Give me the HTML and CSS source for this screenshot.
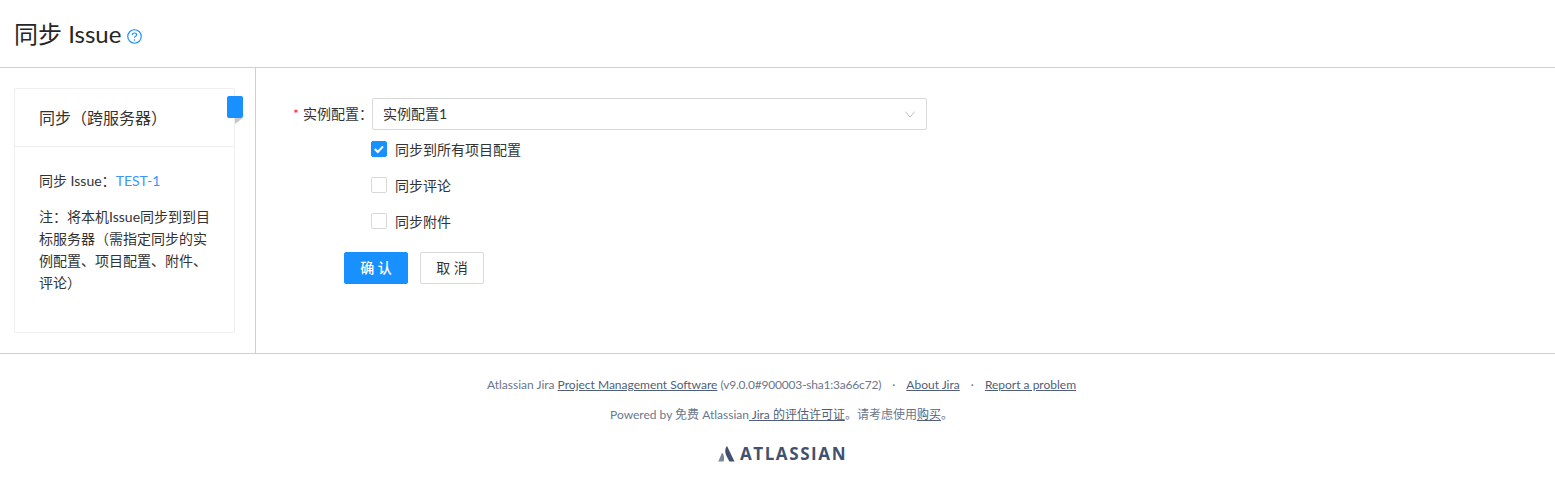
FILE: index.html
```html
<!DOCTYPE html>
<html lang="zh-CN">
<head>
<meta charset="utf-8">
<title>同步 Issue</title>
<link rel="stylesheet" href="styles.css">
</head>
<body>
<header class="page-header">
  <h1 class="page-title">同步 Issue</h1>
  <svg class="help" width="15" height="15" viewBox="0 0 14 14" fill="none">
    <circle cx="7" cy="7" r="6.3" stroke="#1890ff" stroke-width="1.1"/>
    <path d="M5 5.5C5 4.4 5.9 3.7 7 3.7s2 .7 2 1.7c0 1.4-2 1.4-2 2.8" stroke="#1890ff" stroke-width="1"/>
    <circle cx="7" cy="10.2" r=".7" fill="#1890ff"/>
  </svg>
</header>
<div class="content">
  <aside class="side">
    <div class="card">
      <div class="ribbon"></div>
      <div class="card-head">同步（跨服务器）</div>
      <div class="card-body">
        <p class="line">同步 Issue：<a class="issue-link">TEST-1</a></p>
        <p class="note">注：将本机Issue同步到到目标服务器（需指定同步的实例配置、项目配置、附件、评论）</p>
      </div>
    </div>
  </aside>
  <main class="main">
    <div class="form-row">
      <label class="form-label"><span class="req">*</span>实例配置：</label>
      <div class="select">
        <span>实例配置1</span>
        <svg class="chev" width="10" height="7" viewBox="0 0 10 7" fill="none"><path d="M.4 .6L5 6.2 9.6 .6" stroke="#bfbfbf" stroke-width="1"/></svg>
      </div>
    </div>
    <div class="checks">
      <div class="check-row">
        <span class="box on"><svg width="16" height="16" viewBox="0 0 16 16" fill="none"><path d="M3.8 8l3 3 5.2-5.6" stroke="#fff" stroke-width="2"/></svg></span>
        <span>同步到所有项目配置</span>
      </div>
      <div class="check-row"><span class="box"></span><span>同步评论</span></div>
      <div class="check-row"><span class="box"></span><span>同步附件</span></div>
    </div>
    <div class="actions">
      <button class="btn primary" type="button">确 认</button>
      <button class="btn" type="button">取 消</button>
    </div>
  </main>
</div>
<footer class="footer">
  <p class="foot-line first">Atlassian Jira <a>Project Management Software</a> <span class="version">(v9.0.0#900003-sha1:3a66c72)</span><span class="dot">·</span><a>About Jira</a><span class="dot">·</span><a>Report a problem</a></p>
  <p class="foot-line second">Powered by 免费 Atlassian<a> Jira 的评估许可证</a>。请考虑使用<a>购买</a>。</p>
  <div class="logo">
    <svg width="17" height="16" viewBox="0 0 17 16"><path d="M8.5 0.5C7 3 6.5 6.5 9 11l2.4 4.5H16.5L9.4 .8C9.1 .3 8.7 .2 8.5 .5z" fill="#42526e"/><path d="M4.6 7.3C4.3 6.9 3.9 7 3.7 7.4L.3 15.5H5.6C6.6 13 6.2 9.3 4.6 7.3z" fill="#7a869a"/></svg>
    <span class="logo-text">ATLASSIAN</span>
  </div>
</footer>
</body>
</html>
```
FILE: styles.css
```css
* { box-sizing: border-box; }
html, body { margin: 0; padding: 0; background: #fff; }
body {
  font-family: Lato, "Noto Sans CJK SC", sans-serif;
  font-size: 14px;
  color: #333;
  height: 482px;
  overflow: hidden;
  text-spacing-trim: space-all;
}
p { margin: 0; }
.page-header {
  height: 68px;
  border-bottom: 1px solid #d3d0cb;
  padding: 0 14px;
  display: flex;
  align-items: center;
  gap: 6px;
}
.page-title { margin: 0; font-size: 24px; font-weight: 400; color: #262626; line-height: 32px; }
.help { margin-top: 5px; }
.content { display: flex; height: 286px; border-bottom: 1px solid #d3d0cb; }
.side { width: 256px; flex: none; border-right: 1px solid #d3d0cb; padding: 20px 20px 0 14px; }
.card { position: relative; width: 221px; height: 245px; border: 1px solid #eeeeee; border-radius: 2px; }
.ribbon {
  position: absolute; top: 7px; left: 212px; width: 16px; height: 22px;
  background: #1890ff; border-radius: 2px;
}
.ribbon::after {
  content: ""; position: absolute; top: 22px; left: 8px;
  border-top: 6px solid #c8c8c8; border-right: 8px solid transparent; width: 0; height: 0;
}
.card-head { height: 58px; padding: 0 24px; border-bottom: 1px solid #eeeeee; font-size: 16px; line-height: 58px; color: #333; }
.card-body { padding: 23px 24px 0; line-height: 22px; }
.line { margin-bottom: 14px; }
.issue-link { color: #3a96fb; }
.note { width: 172px; }
.main { flex: 1; padding: 30px 0 0 36px; }
.form-row { display: flex; align-items: center; height: 32px; }
.form-label { width: 80px; padding-left: 1px; white-space: nowrap; color: #333; margin-top: -2px; }
.req { color: #f5222d; margin-right: 4px; }
.select {
  width: 555px; height: 32px; border: 1px solid #d9d9d9; border-radius: 2px;
  padding: 0 11px 3px 10px; display: flex; align-items: center; justify-content: space-between;
}
.chev { margin-top: 3px; }
.checks { padding-left: 79px; }
.check-row { display: flex; align-items: center; gap: 8px; height: 16px; margin-top: 20px; color: #333; }
.check-row:first-child { margin-top: 11px; }
.box { width: 16px; height: 16px; border: 1px solid #d9d9d9; border-radius: 2px; flex: none; position: relative; background: #fff; }
.box svg { position: absolute; left: -1px; top: -1px; }
.box.on { background: #1890ff; border-color: #1890ff; }
.actions { display: flex; gap: 12px; margin: 23px 0 0 52px; }
.btn {
  width: 64px; height: 32px; border: 1px solid #d9d9d9; border-radius: 2px; background: #fff;
  font: inherit; color: #333; padding: 0 0 2px;
}
.btn.primary { background: #1890ff; border-color: #1890ff; color: #fff; font-weight: 500; }
.footer { text-align: center; color: #6b778c; font-size: 12px; line-height: 18px; padding-left: 8px; }
.footer a { color: #505f79; text-decoration: underline; }
.version { letter-spacing: -0.2px; }
.foot-line.first { margin-top: 22px; }
.foot-line.second { margin-top: 12px; }
.dot { margin: 0 11px; }
.logo { display: flex; justify-content: center; align-items: center; gap: 5px; margin-top: 18px; height: 24px; padding-left: 2px; }
.logo-text { font-family: "Open Sans", sans-serif; font-weight: 700; font-size: 17px; letter-spacing: 1.6px; color: #42526e; }
```
